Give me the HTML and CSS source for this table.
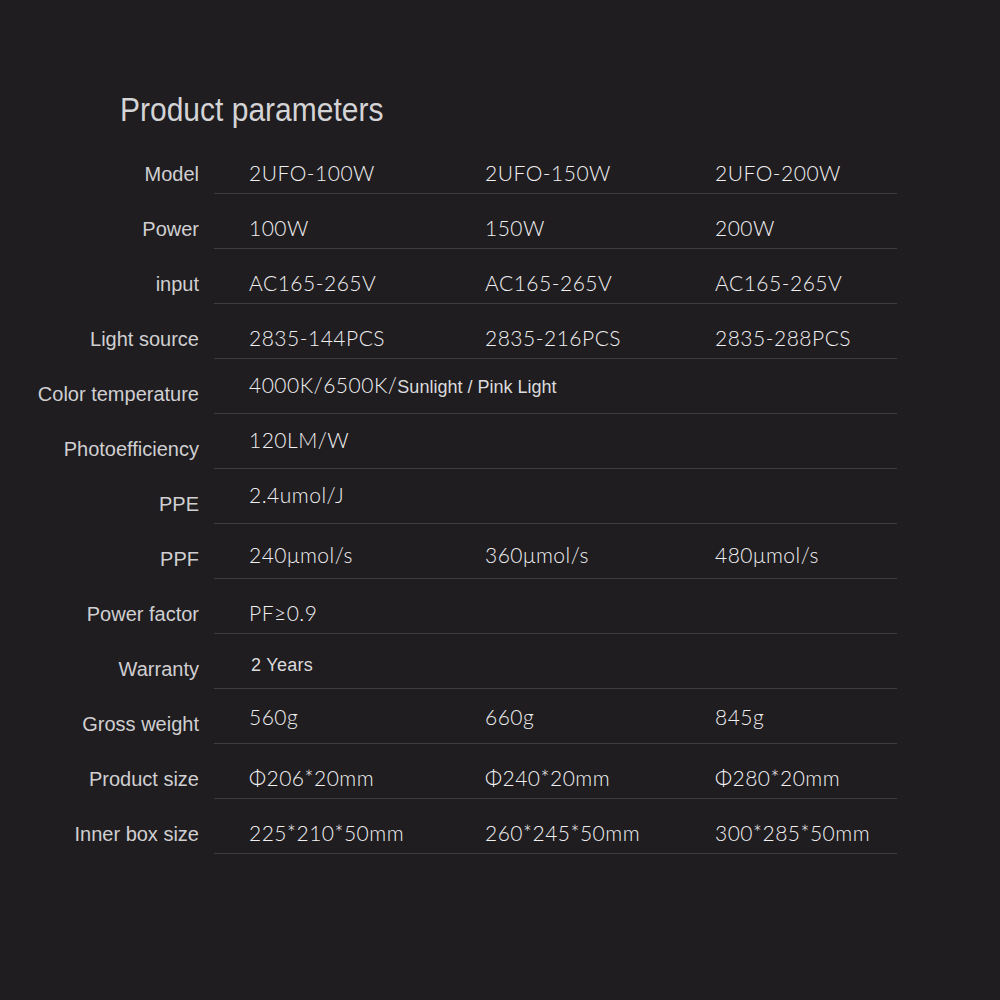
FILE: index.html
```html
<!DOCTYPE html>
<html>
<head>
<meta charset="utf-8">
<link rel="stylesheet" href="styles.css">
</head>
<body>
<div class="page">
  <h1 class="title">Product parameters</h1>
  <div class="table">
    <div class="row"><div class="label">Model</div><div class="cells"><span>2UFO-100W</span><span>2UFO-150W</span><span>2UFO-200W</span></div></div>
    <div class="row"><div class="label">Power</div><div class="cells"><span>100W</span><span>150W</span><span>200W</span></div></div>
    <div class="row"><div class="label">input</div><div class="cells"><span>AC165-265V</span><span>AC165-265V</span><span>AC165-265V</span></div></div>
    <div class="row"><div class="label">Light source</div><div class="cells"><span>2835-144PCS</span><span>2835-216PCS</span><span>2835-288PCS</span></div></div>
    <div class="row"><div class="label">Color temperature</div><div class="cells up"><span class="wide">4000K/6500K/<span class="sans">Sunlight / Pink Light</span></span></div></div>
    <div class="row"><div class="label">Photoefficiency</div><div class="cells up"><span>120LM/W</span></div></div>
    <div class="row"><div class="label">PPE</div><div class="cells up"><span>2.4umol/J</span></div></div>
    <div class="row"><div class="label">PPF</div><div class="cells mid"><span>240μmol/s</span><span>360μmol/s</span><span>480μmol/s</span></div></div>
    <div class="row"><div class="label">Power factor</div><div class="cells"><span>PF≥0.9</span></div></div>
    <div class="row"><div class="label">Warranty</div><div class="cells mid"><span class="sans years">2 Years</span></div></div>
    <div class="row"><div class="label">Gross weight</div><div class="cells weight"><span>560g</span><span>660g</span><span>845g</span></div></div>
    <div class="row"><div class="label">Product size</div><div class="cells"><span>Φ206*20mm</span><span>Φ240*20mm</span><span>Φ280*20mm</span></div></div>
    <div class="row"><div class="label">Inner box size</div><div class="cells"><span>225*210*50mm</span><span>260*245*50mm</span><span>300*285*50mm</span></div></div>
  </div>
</div>
</body>
</html>
```
FILE: styles.css
```css
html, body {
  margin: 0;
  padding: 0;
  background: #1f1d20;
}
.page {
  width: 1000px;
  height: 1000px;
  padding-top: 92px;
  box-sizing: border-box;
}
.title {
  margin: 0 0 11px 120px;
  font-family: "Liberation Sans", Arial, sans-serif;
  font-weight: normal;
  font-size: 30px;
  line-height: 36px;
  color: #d4d3d5;
  transform: scaleY(1.1);
  transform-origin: 0 60%;
}
.table {
  display: flex;
  flex-direction: column;
}
.row {
  display: flex;
  height: 55px;
}
.label {
  width: 199px;
  flex: none;
  text-align: right;
  font-family: "Liberation Sans", Arial, sans-serif;
  font-size: 20px;
  line-height: 24px;
  color: #d0cfd1;
  padding-top: 23px;
  box-sizing: border-box;
}
.cells {
  margin-left: 15px;
  width: 683px;
  border-bottom: 1px solid #3e3c40;
  display: grid;
  grid-template-columns: 236px 230px 1fr;
  padding-left: 35px;
  padding-top: 22px;
  box-sizing: border-box;
  font-family: Lato, "Liberation Sans", sans-serif;
  font-weight: 300;
  font-size: 21px;
  line-height: 24px;
  letter-spacing: 0.5px;
  color: #f0eff1;
}
.cells.up {
  padding-top: 14px;
}
.cells.mid {
  padding-top: 19px;
}
.cells.weight {
  padding-top: 16px;
}
.wide {
  grid-column: 1 / 4;
}
.sans {
  font-family: "Liberation Sans", Arial, sans-serif;
  font-weight: normal;
  font-size: 18px;
  letter-spacing: 0;
  color: #dcdbdd;
}
.years {
  margin-left: 2px;
  letter-spacing: 0.3px;
}
```
